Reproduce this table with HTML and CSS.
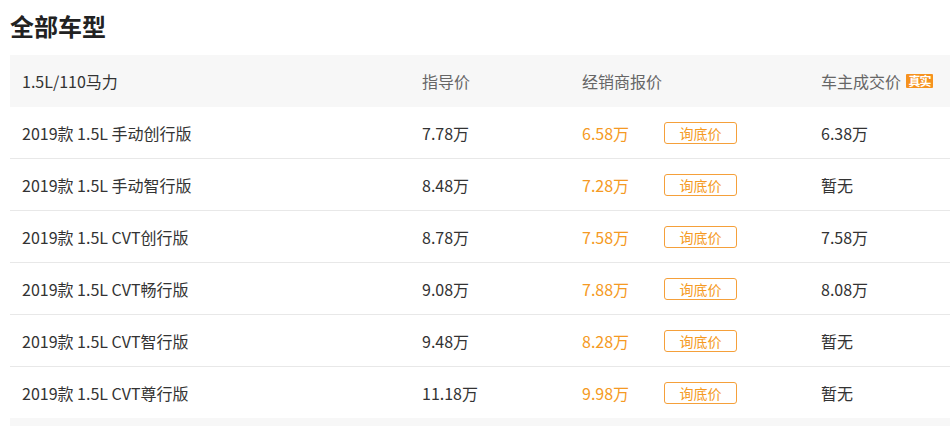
FILE: index.html
```html
<!DOCTYPE html>
<html lang="zh-CN">
<head>
<meta charset="utf-8">
<title>全部车型</title>
<link rel="stylesheet" href="styles.css">
</head>
<body>
<div class="page">
  <h2 class="title">全部车型</h2>
  <div class="table">
    <div class="row head">
      <div class="cell name">1.5L/110马力</div>
      <div class="cell sub">指导价</div>
      <div class="cell sub">经销商报价</div>
      <div class="cell sub">车主成交价<span class="badge">真实</span></div>
    </div>
    <div class="row">
      <div class="cell">2019款 1.5L 手动创行版</div>
      <div class="cell">7.78万</div>
      <div class="cell"><span class="price">6.58万</span><span class="btn">询底价</span></div>
      <div class="cell">6.38万</div>
    </div>
    <div class="row">
      <div class="cell">2019款 1.5L 手动智行版</div>
      <div class="cell">8.48万</div>
      <div class="cell"><span class="price">7.28万</span><span class="btn">询底价</span></div>
      <div class="cell">暂无</div>
    </div>
    <div class="row">
      <div class="cell">2019款 1.5L CVT创行版</div>
      <div class="cell">8.78万</div>
      <div class="cell"><span class="price">7.58万</span><span class="btn">询底价</span></div>
      <div class="cell">7.58万</div>
    </div>
    <div class="row">
      <div class="cell">2019款 1.5L CVT畅行版</div>
      <div class="cell">9.08万</div>
      <div class="cell"><span class="price">7.88万</span><span class="btn">询底价</span></div>
      <div class="cell">8.08万</div>
    </div>
    <div class="row">
      <div class="cell">2019款 1.5L CVT智行版</div>
      <div class="cell">9.48万</div>
      <div class="cell"><span class="price">8.28万</span><span class="btn">询底价</span></div>
      <div class="cell">暂无</div>
    </div>
    <div class="row last">
      <div class="cell">2019款 1.5L CVT尊行版</div>
      <div class="cell">11.18万</div>
      <div class="cell"><span class="price">9.98万</span><span class="btn">询底价</span></div>
      <div class="cell">暂无</div>
    </div>
    <div class="row head next"></div>
  </div>
</div>
</body>
</html>
```

FILE: styles.css
```css
html, body {
  margin: 0;
  padding: 0;
  background: #fff;
  overflow: hidden;
}
body {
  font-family: "Noto Sans CJK SC", "Noto Sans", sans-serif;
  color: #333;
}
.page {
  padding-left: 10px;
  width: 960px;
}
.title {
  margin: 0;
  height: 55px;
  padding-top: 8px;
  box-sizing: border-box;
  font-size: 24px;
  line-height: 36px;
  font-weight: bold;
  color: #222;
}
.table {
  width: 950px;
}
.row {
  display: grid;
  grid-template-columns: 400px 160px 239px 1fr;
  height: 52px;
  align-items: center;
  border-bottom: 1px solid #e8e8e8;
  box-sizing: border-box;
  font-size: 16px;
}
.row.head {
  background: #f7f7f7;
  border-bottom: none;
}
.row.last {
  height: 51px;
  border-bottom: none;
}
.cell {
  padding-left: 12px;
  display: flex;
  align-items: center;
  white-space: nowrap;
}
.sub {
  color: #666;
}
.price {
  width: 82px;
  color: #f59a23;
}
.btn {
  width: 71px;
  height: 20px;
  border: 1px solid #f5a03a;
  border-radius: 3px;
  color: #f59a23;
  font-size: 14px;
  line-height: 20px;
  text-align: center;
}
.badge {
  margin-left: 5px;
  width: 27px;
  text-align: center;
  background: #f6921e;
  color: #fff;
  font-size: 12px;
  font-weight: bold;
  line-height: 14px;
  height: 14px;
  letter-spacing: -1px;
  border-radius: 1px;
}
```
